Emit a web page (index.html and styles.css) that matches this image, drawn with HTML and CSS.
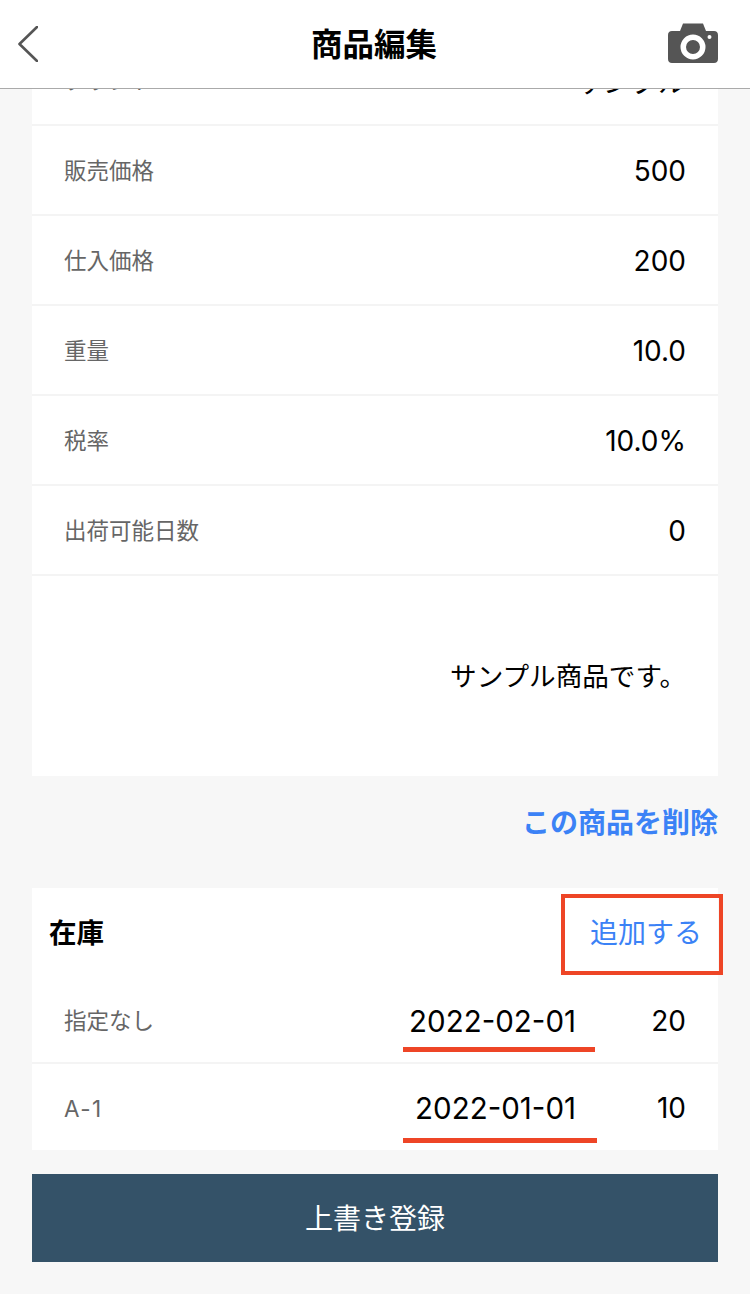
FILE: index.html
```html
<!DOCTYPE html>
<html lang="ja">
<head>
    <meta charset="UTF-8">
    <meta name="viewport" content="width=device-width, initial-scale=1.0">
    <title>商品編集</title>
    <link rel="stylesheet" href="styles.css">
</head>
<body>
    <div class="header">
        <svg class="back-icon" viewBox="0 0 20 36" fill="none" xmlns="http://www.w3.org/2000/svg">
            <path d="M19 1L1.500 18L19 35" stroke="#555" stroke-width="2.600" stroke-linecap="round" stroke-linejoin="round"/>
        </svg>
        <h1>商品編集</h1>
        <svg class="camera-icon" viewBox="0 0 50 40" xmlns="http://www.w3.org/2000/svg">
            <path fill="#555" fill-rule="evenodd" d="M15 0.500H35L38 8H46C48.500 8 50 9.500 50 12V36C50 38.500 48.500 40 46 40H4C1.500 40 0 38.500 0 36V12C0 9.500 1.500 8 4 8H12Z M25 11.500A12.500 12.500 0 1 0 25 36.500A12.500 12.500 0 1 0 25 11.500Z M25 17A7 7 0 1 1 25 31A7 7 0 1 1 25 17Z M41.500 12A2 2 0 1 0 41.500 16A2 2 0 1 0 41.500 12Z"/>
        </svg>
    </div>

    <div class="content">
        <div class="card">
            <div class="row"><span class="label">ブランド</span><span class="value">サンプル</span></div>
            <div class="row"><span class="label">販売価格</span><span class="value">500</span></div>
            <div class="row"><span class="label">仕入価格</span><span class="value">200</span></div>
            <div class="row"><span class="label">重量</span><span class="value">10.0</span></div>
            <div class="row"><span class="label">税率</span><span class="value">10.0%</span></div>
            <div class="row"><span class="label">出荷可能日数</span><span class="value">0</span></div>
            <div class="description">サンプル商品です。</div>
        </div>

        <div class="delete-link">この商品を削除</div>

        <div class="card stock">
            <div class="stock-header">
                <span class="stock-title">在庫</span>
                <span class="add-link">追加する<span class="highlight-box"></span></span>
            </div>
            <div class="stock-row">
                <span class="label">指定なし</span>
                <span class="date">2022-02-01<span class="underline"></span></span>
                <span class="qty">20</span>
            </div>
            <div class="stock-row">
                <span class="label code">A-1</span>
                <span class="date">2022-01-01<span class="underline long"></span></span>
                <span class="qty">10</span>
            </div>
        </div>

        <button class="save-btn">上書き登録</button>
    </div>
</body>
</html>
```

FILE: styles.css
```css
:root {
    --bg: #f7f7f7;
    --line: #f4f4f4;
    --label: #666;
    --blue: #3b82f6;
    --red: #ee4526;
}

* {
    box-sizing: border-box;
}

body {
    margin: 0;
    background-color: var(--bg);
    color: #000;
    font-family: Inter, "Noto Sans CJK JP", sans-serif;
}

.header {
    position: fixed;
    top: 0;
    left: 0;
    right: 0;
    height: 89px;
    display: grid;
    grid-template-columns: 1fr auto 1fr;
    align-items: center;
    padding: 0 32px 0 18px;
    background: white;
    border-bottom: 1px solid #aaa;
    z-index: 10;
}

.header h1 {
    margin: 0 0 5px;
    font-size: 31.500px;
    font-weight: 700;
    transform: translateX(6px);
}

.back-icon {
    width: 20px;
    height: 36px;
    margin-bottom: 1px;
}

.camera-icon {
    width: 50px;
    height: 40px;
    margin-bottom: 2px;
    justify-self: end;
}

.content {
    padding: 36px 32px 0;
}

.card {
    background: white;
}

.row {
    height: 90px;
    display: flex;
    align-items: center;
    justify-content: space-between;
    padding: 0 32px;
    border-bottom: 2px solid var(--line);
}

.label {
    padding-bottom: 3px;
    font-size: 22.500px;
    color: var(--label);
}

.value {
    padding-top: 2px;
    font-size: 28px;
}

.description {
    height: 200px;
    padding: 79px 32px 0 0;
    text-align: right;
    font-size: 26.600px;
}

.delete-link {
    padding: 25px 0 47px;
    text-align: right;
    font-size: 28px;
    font-weight: 700;
    color: var(--blue);
}

.stock-header {
    height: 90px;
    display: flex;
    align-items: center;
    justify-content: space-between;
    padding: 0 16px 4px 17px;
}

.stock-title {
    font-size: 27.500px;
    font-weight: 700;
}

.add-link {
    position: relative;
    font-size: 28px;
    color: var(--blue);
}

.highlight-box {
    position: absolute;
    top: -17px;
    left: -29px;
    width: 162px;
    height: 81px;
    border: 4px solid var(--red);
}

.stock-row {
    height: 86px;
    display: flex;
    align-items: center;
    padding: 0 32px;
    border-bottom: 2px solid var(--line);
}

.stock-row:last-child {
    border-bottom: none;
}

.stock-row .label {
    flex: 1;
}

.stock-row .code {
    padding: 2px 0 0;
    letter-spacing: 1.500px;
}

.date {
    position: relative;
    width: 193px;
    padding: 2px 20px 0 0;
    text-align: right;
    font-size: 29.500px;
}

.underline {
    position: absolute;
    left: 0;
    right: 1px;
    bottom: -13px;
    height: 5px;
    background: var(--red);
}

.underline.long {
    right: -1px;
    bottom: -17px;
}

.qty {
    width: 90px;
    padding-top: 2px;
    text-align: right;
    font-size: 28px;
}

.save-btn {
    display: block;
    width: 100%;
    height: 88px;
    margin-top: 24px;
    padding-bottom: 4px;
    border: none;
    background: #345268;
    color: white;
    font-family: inherit;
    font-size: 28px;
}
```
